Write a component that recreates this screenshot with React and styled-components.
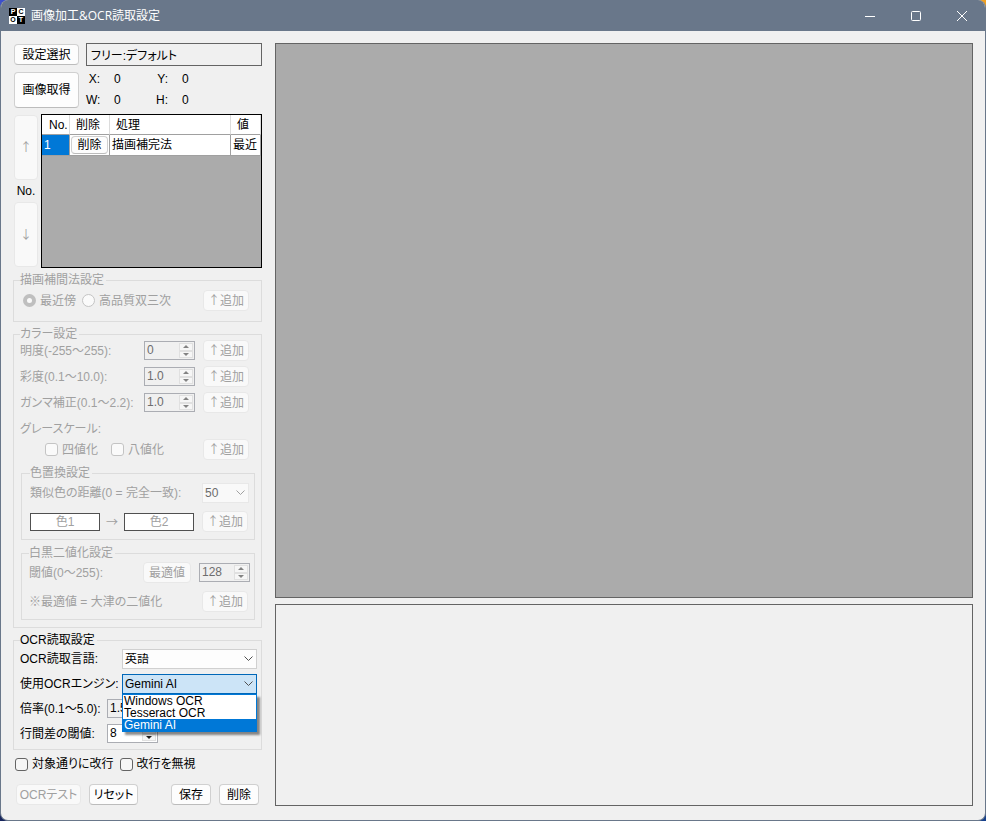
import React, { useState } from "react";
import styled, { createGlobalStyle } from "styled-components";

//#region styled components
const GlobalStyle = createGlobalStyle`
  *, *::before, *::after {
    box-sizing: border-box;
  }
  body {
    margin: 0;
    background:
      radial-gradient(circle at 100% 0, #f0a020 0, #f0a020 8px, transparent 9px),
      linear-gradient(100deg, transparent 50%, #16408c 100%),
      linear-gradient(#3c50cc, #16245c);
  }
  body, button, input, select {
    font-family: "Liberation Sans", "Noto Sans CJK JP", sans-serif;
    font-size: 12px;
    line-height: 12px;
    font-feature-settings: "palt";
    color: #000;
  }
`;

const Window = styled.div`
  display: flex;
  flex-direction: column;
  min-height: 100vh;
  border: 1px solid #69778a;
  border-top: 0;
  border-radius: 8px;
  background: #f0f0f0;
  overflow: hidden;
`;
const TitleBar = styled.header`
  display: flex;
  align-items: center;
  height: 31px;
  padding-left: 8px;
  background: #69778a;
  color: #fff;
`;
const Logo = styled.div`
  display: grid;
  grid-template-columns: 8px 8px;
  grid-auto-rows: 8px;
`;
const LogoCell = styled.span`
  font-size: 7px;
  line-height: 8px;
  font-weight: bold;
  text-align: center;
  background: ${props => (props.$dark ? "#000" : "#fff")};
  color: ${props => (props.$dark ? "#fff" : "#000")};
`;
const Title = styled.h1`
  flex: 1;
  margin: 0 0 0 6px;
  font-family: "Open Sans", "Noto Sans CJK JP", sans-serif;
  font-size: 12px;
  line-height: 16px;
  font-weight: 400;
  font-feature-settings: normal;
`;
const CaptionButton = styled.button`
  display: flex;
  align-items: center;
  justify-content: center;
  width: 46px;
  height: 31px;
  padding: 0;
  border: 0;
  background: none;
`;

const Content = styled.main`
  flex: 1;
  display: grid;
  grid-template-columns: 249px 1fr;
  column-gap: 13px;
  padding: 12px 12px 14px;
`;
const Sidebar = styled.div`
  display: flex;
  flex-direction: column;
  gap: 6px;
`;
const Views = styled.div`
  display: grid;
  grid-template-rows: 11fr 4fr;
  gap: 6px;
`;
const View = styled.section`
  border: 1px solid #646464;
  background: ${props => (props.$filled ? "#ababab" : "#f0f0f0")};
`;

const Button = styled.button`
  height: ${props => props.$height || 21}px;
  width: ${props => (props.$width ? props.$width + "px" : "auto")};
  padding: 0;
  border: 1px solid #d0d0d0;
  border-bottom-color: #bcbcbc;
  border-radius: 4px;
  background: #fdfdfd;
  white-space: nowrap;
  &:disabled {
    border-color: #e8e8e8;
    background: #f9f9f9;
    color: #a0a0a0;
  }
`;
const ArrowText = styled.span`
  font-family: "Noto Sans CJK JP", sans-serif;
  font-feature-settings: normal;
`;

const TopRow = styled.div`
  display: grid;
  grid-template-columns: 65px 1fr;
  column-gap: 7px;
  align-items: center;
  padding-left: 1px;
`;
const NameBox = styled.input`
  width: 100%;
  height: 23px;
  padding: 0 4px;
  border: 1px solid #646464;
  background: #f0f0f0;
`;
const Coords = styled.dl`
  display: grid;
  grid-template-columns: 14px 26px 14px auto;
  column-gap: 14px;
  margin: -3px 0;
  line-height: 21px;
`;
const CoordName = styled.dt`
  text-align: right;
  white-space: nowrap;
`;
const CoordValue = styled.dd`
  margin: 0;
`;

const ListRow = styled.div`
  display: grid;
  grid-template-columns: 24px 1fr;
  column-gap: 3px;
  height: 154px;
  padding-left: 1px;
`;
const Mover = styled.div`
  display: flex;
  flex-direction: column;
  align-items: center;
  justify-content: space-between;
  padding: 1px 0;
`;
const GridBox = styled.div`
  border: 1px solid #000;
  background: #ababab;
  overflow: hidden;
`;
const Table = styled.table`
  width: 100%;
  table-layout: fixed;
  border-collapse: separate;
  border-spacing: 0;
`;
const Th = styled.th`
  width: ${props => (props.$width ? props.$width + "px" : "auto")};
  height: 20px;
  padding: 0 0 0 ${props => props.$indent || 6}px;
  border-right: 1px solid #dcdcdc;
  border-bottom: 1px solid #a0a0a0;
  background: #fff;
  font-weight: 400;
  text-align: left;
  white-space: nowrap;
`;
const Td = styled.td`
  height: 21px;
  padding: 0 0 0 ${props => (props.$button ? 1 : 2)}px;
  border-right: 1px solid #a0a0a0;
  border-bottom: 1px solid #a0a0a0;
  background: ${props => (props.$selected ? "#0078d7" : "#fff")};
  color: ${props => (props.$selected ? "#fff" : "#000")};
  white-space: nowrap;
`;

const Group = styled.fieldset`
  display: flex;
  flex-direction: column;
  gap: ${props => props.$gap || 5}px;
  min-width: 0;
  margin: 0;
  padding: ${props => props.$pad};
  border: 1px solid #dcdcdc;
  color: ${props => (props.disabled ? "#a0a0a0" : "#000")};
`;
const InnerGroup = styled(Group)`
  margin: 2px 2px 0 1px;
`;
const Legend = styled.legend`
  padding: 0 2px 0 0;
  line-height: 12px;
`;
const Row = styled.div`
  display: grid;
  grid-template-columns: ${props => props.$cols};
  column-gap: ${props => props.$gap || 0}px;
  align-items: center;
  height: 21px;
  padding-right: ${props => props.$right || 0}px;
  white-space: nowrap;
`;
const Options = styled.div`
  display: flex;
  align-items: center;
  gap: ${props => props.$gap}px;
  height: ${props => props.$height || 21}px;
  padding: 0 8px 0 ${props => props.$indent}px;
`;
const Option = styled.label`
  display: flex;
  align-items: center;
  gap: 4px;
  white-space: nowrap;
`;
const Tick = styled.input`
  appearance: none;
  width: 13px;
  height: 13px;
  margin: 0;
  border: 1px solid #646464;
  border-radius: ${props => (props.type === "radio" ? "50%" : "3px")};
  background: #f6f6f6;
  &:disabled {
    border-color: #c4c4c4;
    background: #fafafa;
  }
  &:checked {
    border: 4px solid #bfbfbf;
  }
`;
const Push = styled.div`
  flex: 1;
`;

const SpinBox = styled.div`
  display: grid;
  grid-template-columns: 1fr 14px;
  width: 51px;
  height: 19px;
  padding: 1px;
  border: 1px solid #abadb3;
  background: ${props => (props.$disabled ? "#f0f0f0" : props.$bg || "#fff")};
`;
const SpinInput = styled.input`
  width: 100%;
  height: 13px;
  min-width: 0;
  padding: 0 0 0 1px;
  border: 0;
  background: none;
  &:disabled {
    color: #6d6d6d;
  }
`;
const SpinButtons = styled.div`
  display: grid;
  grid-template-rows: 1fr 1fr;
`;
const SpinButton = styled.button`
  display: flex;
  align-items: center;
  justify-content: center;
  padding: 0;
  border: 1px solid #e0e0e0;
  background: #f6f6f6;
  color: #202020;
  &:disabled {
    color: #838383;
  }
`;

const SelectBox = styled.div`
  position: relative;
  display: grid;
  align-items: center;
`;
const SelectInput = styled.select`
  grid-area: 1 / 1;
  appearance: none;
  width: 100%;
  height: 20px;
  padding: 0 2px;
  border: 1px solid ${props => (props.$open ? "#0067b8" : "#d0d0d0")};
  border-radius: 0;
  background: ${props => (props.$open ? "#cce4f7" : "#fdfdfd")};
  opacity: 1;
  &:disabled {
    border-color: #e8e8e8;
    background: #f9f9f9;
    color: #6d6d6d;
  }
`;
const Arrow = styled.svg`
  grid-area: 1 / 1;
  justify-self: end;
  margin-right: 3px;
  pointer-events: none;
`;
const Menu = styled.ul`
  position: absolute;
  top: 100%;
  left: 0;
  right: 0;
  z-index: 1;
  margin: 0;
  padding: 0;
  border: 1px solid #0078d7;
  background: #fff;
  box-shadow: 3px 3px 2px rgba(0, 0, 0, 0.45);
  list-style: none;
`;
const MenuItem = styled.li`
  padding-left: 1px;
  line-height: 12px;
  background: ${props => (props.$active ? "#0078d7" : "#fff")};
  color: ${props => (props.$active ? "#fff" : "#000")};
`;

const Swatch = styled.button`
  height: 18px;
  padding: 0;
  border: 1px solid #505050;
  background: #fff;
  &:disabled {
    color: #a0a0a0;
  }
`;
const Between = styled(ArrowText)`
  justify-self: center;
`;
const Footer = styled.div`
  display: flex;
  gap: 8px;
  margin-top: 6px;
  padding: 0 3px;
`;
//#endregion

const engines = ["Windows OCR", "Tesseract OCR", "Gemini AI"];

const colorRows = [
  { id: "brightness", label: "明度(-255～255):", value: "0" },
  { id: "saturation", label: "彩度(0.1～10.0):", value: "1.0" },
  { id: "gamma", label: "ガンマ補正(0.1～2.2):", value: "1.0" }
];

const AddButton = () => (
  <Button disabled $width={46}>
    <ArrowText>↑</ArrowText>追加
  </Button>
);

const Spin = ({ id, value, disabled, bg }) => (
  <SpinBox $disabled={disabled} $bg={bg}>
    <SpinInput id={id} type="text" defaultValue={value} disabled={disabled} />
    <SpinButtons>
      <SpinButton disabled={disabled} aria-label="増やす">
        <svg width="6" height="3">
          <path d="M3 0L6 3H0Z" fill="currentColor" />
        </svg>
      </SpinButton>
      <SpinButton disabled={disabled} aria-label="減らす">
        <svg width="6" height="3">
          <path d="M0 0H6L3 3Z" fill="currentColor" />
        </svg>
      </SpinButton>
    </SpinButtons>
  </SpinBox>
);

const Chevron = ({ color }) => (
  <Arrow width="11" height="6" fill="none" stroke={color}>
    <path d="M1.5 0.5L5.5 4.5L9.5 0.5" />
  </Arrow>
);

const Check = ({ label, disabled }) => (
  <Option>
    <Tick type="checkbox" disabled={disabled} />
    {label}
  </Option>
);

const App = () => {
  const [engine, setEngine] = useState("Gemini AI");
  const [open, setOpen] = useState(true);

  const pick = name => {
    setEngine(name);
    setOpen(false);
  };

  return (
    <Window>
      <GlobalStyle />
      <TitleBar>
        <Logo>
          <LogoCell $dark>P</LogoCell>
          <LogoCell>C</LogoCell>
          <LogoCell>O</LogoCell>
          <LogoCell $dark>T</LogoCell>
        </Logo>
        <Title>画像加工&amp;OCR読取設定</Title>
        <CaptionButton aria-label="最小化">
          <svg width="10" height="10" stroke="#fff">
            <path d="M0 5.5H10" />
          </svg>
        </CaptionButton>
        <CaptionButton aria-label="最大化">
          <svg width="10" height="10" fill="none" stroke="#fff">
            <rect x="0.5" y="0.5" width="9" height="9" rx="1" />
          </svg>
        </CaptionButton>
        <CaptionButton aria-label="閉じる">
          <svg width="10" height="10" stroke="#fff">
            <path d="M0 0L10 10M10 0L0 10" />
          </svg>
        </CaptionButton>
      </TitleBar>

      <Content>
        <Sidebar>
          <TopRow>
            <Button>設定選択</Button>
            <NameBox readOnly aria-label="設定" value="フリー:デフォルト" />
          </TopRow>
          <TopRow>
            <Button $height={36}>画像取得</Button>
            <Coords>
              <CoordName>X:</CoordName>
              <CoordValue>0</CoordValue>
              <CoordName>Y:</CoordName>
              <CoordValue>0</CoordValue>
              <CoordName>W:</CoordName>
              <CoordValue>0</CoordValue>
              <CoordName>H:</CoordName>
              <CoordValue>0</CoordValue>
            </Coords>
          </TopRow>

          <ListRow>
            <Mover>
              <Button disabled $width={24} $height={65}>
                <ArrowText>↑</ArrowText>
              </Button>
              <span>No.</span>
              <Button disabled $width={24} $height={65}>
                <ArrowText>↓</ArrowText>
              </Button>
            </Mover>
            <GridBox>
              <Table>
                <thead>
                  <tr>
                    <Th $width={28} $indent={7}>
                      No.
                    </Th>
                    <Th $width={40}>削除</Th>
                    <Th $width={121}>処理</Th>
                    <Th>値</Th>
                  </tr>
                </thead>
                <tbody>
                  <tr>
                    <Td $selected>1</Td>
                    <Td $button>
                      <Button $width={37} $height={18}>
                        削除
                      </Button>
                    </Td>
                    <Td>描画補完法</Td>
                    <Td>最近</Td>
                  </tr>
                </tbody>
              </Table>
            </GridBox>
          </ListRow>

          <Group disabled $pad="4px 4px 10px 6px">
            <Legend>描画補間法設定</Legend>
            <Options $indent={3} $gap={6}>
              <Option>
                <Tick type="radio" name="interp" disabled defaultChecked />
                最近傍
              </Option>
              <Option>
                <Tick type="radio" name="interp" disabled />
                高品質双三次
              </Option>
              <Push />
              <AddButton />
            </Options>
          </Group>

          <Group disabled $pad="0 4px 7px 6px">
            <Legend>カラー設定</Legend>
            {colorRows.map(r => (
              <Row key={r.id} $cols="1fr 51px 46px" $gap={8} $right={8}>
                <label htmlFor={r.id}>{r.label}</label>
                <Spin id={r.id} value={r.value} disabled />
                <AddButton />
              </Row>
            ))}
            <div>
              <Row $cols="1fr">グレースケール:</Row>
              <Options $indent={25} $gap={13}>
                <Check label="四値化" disabled />
                <Check label="八値化" disabled />
                <Push />
                <AddButton />
              </Options>
            </div>

            <InnerGroup disabled $gap={8} $pad="3px 5px 7px 8px">
              <Legend>色置換設定</Legend>
              <Row $cols="1fr 47px" $gap={8}>
                <label htmlFor="distance">類似色の距離(0 = 完全一致):</label>
                <SelectBox>
                  <SelectInput id="distance" disabled>
                    <option>50</option>
                  </SelectInput>
                  <Chevron color="#a0a0a0" />
                </SelectBox>
              </Row>
              <Row $cols="70px 8px 70px 46px" $gap={8}>
                <Swatch disabled>色1</Swatch>
                <Between>→</Between>
                <Swatch disabled>色2</Swatch>
                <AddButton />
              </Row>
            </InnerGroup>

            <InnerGroup disabled $gap={8} $pad="3px 4px 7px 7px">
              <Legend>白黒二値化設定</Legend>
              <Row $cols="1fr 48px 51px" $gap={8}>
                <label htmlFor="threshold">閾値(0～255):</label>
                <Button disabled>最適値</Button>
                <Spin id="threshold" value="128" disabled />
              </Row>
              <Row $cols="1fr 46px" $right={2}>
                <span>※最適値 = 大津の二値化</span>
                <AddButton />
              </Row>
            </InnerGroup>
          </Group>

          <Group $gap={4} $pad="2px 4px 5px 6px">
            <Legend>OCR読取設定</Legend>
            <Row $cols="102px 1fr">
              <label htmlFor="lang">OCR読取言語:</label>
              <SelectBox>
                <SelectInput id="lang">
                  <option>英語</option>
                </SelectInput>
                <Chevron color="#505050" />
              </SelectBox>
            </Row>
            <Row $cols="102px 1fr">
              <label htmlFor="engine">使用OCRエンジン:</label>
              <SelectBox>
                <SelectInput
                  id="engine"
                  $open={open}
                  value={engine}
                  onChange={e => pick(e.target.value)}
                >
                  {engines.map(name => (
                    <option key={name}>{name}</option>
                  ))}
                </SelectInput>
                <Chevron color="#505050" />
                {open && (
                  <Menu>
                    {engines.map(name => (
                      <MenuItem
                        key={name}
                        $active={name === engine}
                        onClick={() => pick(name)}
                      >
                        {name}
                      </MenuItem>
                    ))}
                  </Menu>
                )}
              </SelectBox>
            </Row>
            <Row $cols="87px 51px">
              <label htmlFor="scale">倍率(0.1～5.0):</label>
              <Spin id="scale" value="1.5" bg="#f0f0f0" />
            </Row>
            <Row $cols="87px 51px">
              <label htmlFor="lineGap">行間差の閾値:</label>
              <Spin id="lineGap" value="8" />
            </Row>
          </Group>

          <Options $indent={2} $gap={6} $height={16}>
            <Check label="対象通りに改行" />
            <Check label="改行を無視" />
          </Options>
          <Footer>
            <Button disabled $width={65}>
              OCRテスト
            </Button>
            <Button $width={49}>リセット</Button>
            <Push />
            <Button $width={40}>保存</Button>
            <Button $width={40}>削除</Button>
          </Footer>
        </Sidebar>

        <Views>
          <View $filled />
          <View />
        </Views>
      </Content>
    </Window>
  );
};

export default App;
